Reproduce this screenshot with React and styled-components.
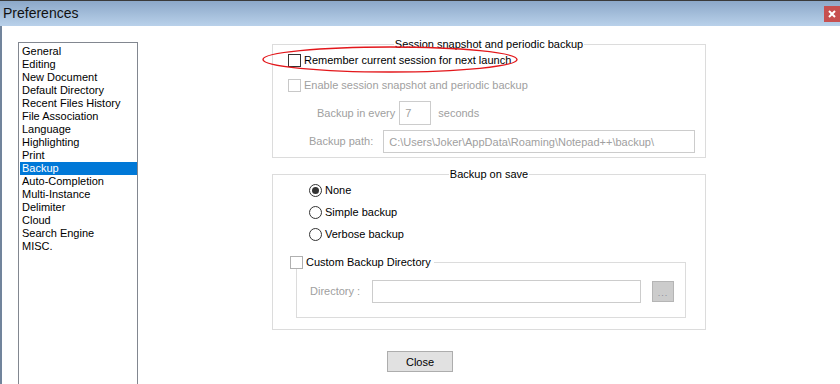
import React from 'react';
import styled, { createGlobalStyle } from 'styled-components';

const GlobalStyle = createGlobalStyle`
  * {
    margin: 0;
    padding: 0;
    box-sizing: border-box;
  }

  html, body, #root {
    width: 100%;
    height: 100%;
    overflow: hidden;
    background: #ffffff;
  }

  body {
    font-family: 'Liberation Sans', Arial, sans-serif;
    font-size: 11px;
    color: #000;
  }
`;

const Window = styled.div`
  width: 840px;
  height: 384px;
  display: flex;
  flex-direction: column;
  overflow: hidden;
`;

const TitleBar = styled.div`
  height: 26px;
  flex-shrink: 0;
  border-top: 1px solid #3a3a3a;
  background: linear-gradient(to bottom, #8ca8c9, #b9d1ea);
  display: flex;
  align-items: flex-start;
  justify-content: space-between;
  padding-left: 3px;
`;

const Title = styled.span`
  font-size: 14px;
  line-height: 25px;
  color: #111;
`;

const CloseX = styled.div`
  width: 16px;
  height: 16px;
  margin-top: 5px;
  background: #c75050;
  display: flex;
  align-items: center;
  justify-content: center;
`;

const Body = styled.div`
  flex: 1;
  display: flex;
  align-items: flex-start;
  border-left: 2px solid #71849c;
  background: #fff;
  overflow: hidden;
`;

const ListBox = styled.ul`
  list-style: none;
  width: 120px;
  height: 400px;
  margin: 16px 0 0 16px;
  border: 1px solid #828790;
  padding: 2px 0;
  flex-shrink: 0;
`;

const ListItem = styled.li`
  height: 13px;
  line-height: 13px;
  margin-left: 1px;
  padding-left: 2px;
  white-space: nowrap;
  background: ${p => (p.$selected ? '#0078d7' : 'transparent')};
  color: ${p => (p.$selected ? '#fff' : '#000')};
`;

const Pane = styled.div`
  width: 434px;
  margin: 18px 0 0 134px;
  display: flex;
  flex-direction: column;
`;

const Group = styled.div`
  position: relative;
  border: 1px solid #dcdcdc;
  margin-top: ${p => p.$top || 0}px;
  margin-left: ${p => p.$left || 0}px;
  margin-right: ${p => p.$right || 0}px;
  padding: ${p => p.$pad};
  display: flex;
  flex-direction: column;
`;

const Legend = styled.div`
  position: absolute;
  top: -7px;
  left: 0;
  right: 0;
  display: flex;
  justify-content: center;
  line-height: 13px;
`;

const LegendText = styled.span`
  background: #fff;
  padding: 0 1px;
  color: #000;
`;

const CheckLegend = styled.div`
  position: absolute;
  top: -7px;
  left: -7px;
  background: #fff;
  padding-right: 3px;
  display: flex;
  align-items: center;
  gap: 3px;
  line-height: 13px;
`;

const Row = styled.div`
  position: relative;
  display: flex;
  align-items: center;
  height: ${p => p.$h || 13}px;
  margin-top: ${p => p.$top || 0}px;
  margin-left: ${p => p.$left || 0}px;
  gap: ${p => p.$gap ?? 3}px;
`;

const Box = styled.span`
  width: 13px;
  height: 13px;
  flex-shrink: 0;
  border: 1px solid ${p => p.$border || '#333'};
  background: #fff;
`;

const Radio = styled.span`
  width: 13px;
  height: 13px;
  flex-shrink: 0;
  border-radius: 50%;
  border: 1px solid #333;
  background: #fff;
  display: flex;
  align-items: center;
  justify-content: center;

  &::after {
    content: '';
    display: ${p => (p.$checked ? 'block' : 'none')};
    width: 7px;
    height: 7px;
    border-radius: 50%;
    background: #333;
  }
`;

const Label = styled.span`
  line-height: 13px;
  white-space: nowrap;
  color: ${p => (p.$disabled ? '#a0a0a0' : '#000')};
  margin-left: ${p => p.$gap || 0}px;
`;

const TextBox = styled.div`
  width: ${p => p.$w}px;
  height: ${p => p.$h || 23}px;
  flex-shrink: 0;
  border: 1px solid #cccccc;
  background: #fff;
  color: #a0a0a0;
  padding-left: 5px;
  display: flex;
  align-items: center;
  white-space: nowrap;
  overflow: hidden;
  margin-left: ${p => p.$gap || 0}px;
`;

const BrowseButton = styled.div`
  width: 22px;
  height: 21px;
  flex-shrink: 0;
  margin-left: 11px;
  background: #cccccc;
  border: 1px solid #b5b5b5;
  color: #8a8a9a;
  font-size: 9px;
  letter-spacing: 1px;
  display: flex;
  align-items: center;
  justify-content: center;
  padding-top: 2px;
`;

const Annotation = styled.svg`
  position: absolute;
  left: -26px;
  top: -8px;
  width: 256px;
  height: 27px;
  pointer-events: none;
  overflow: visible;
`;

const Button = styled.button`
  align-self: flex-start;
  width: 66px;
  height: 21px;
  margin: 21px 0 0 115px;
  background: #e1e1e1;
  border: 1px solid #adadad;
  font-family: inherit;
  font-size: 11px;
  color: #000;
`;

const pages = [
  'General', 'Editing', 'New Document', 'Default Directory', 'Recent Files History',
  'File Association', 'Language', 'Highlighting', 'Print', 'Backup',
  'Auto-Completion', 'Multi-Instance', 'Delimiter', 'Cloud', 'Search Engine', 'MISC.',
];

const App = () => {
  return (
    <>
      <GlobalStyle />
      <Window>
        <TitleBar>
          <Title>Preferences</Title>
          <CloseX>
            <svg width="8" height="8" viewBox="0 0 8 8">
              <path d="M1 1 L7 7 M7 1 L1 7" stroke="#fff" strokeWidth="2" />
            </svg>
          </CloseX>
        </TitleBar>
        <Body>
          <ListBox>
            {pages.map(p => (
              <ListItem key={p} $selected={p === 'Backup'}>{p}</ListItem>
            ))}
          </ListBox>

          <Pane>
            <Group $pad="9px 10px 4px 15px">
              <Legend><LegendText>Session snapshot and periodic backup</LegendText></Legend>
              <Row>
                <Box />
                <Label>Remember current session for next launch</Label>
                <Annotation viewBox="0 0 256 27">
                  <ellipse cx="128" cy="13.5" rx="127" ry="12.5" fill="none" stroke="#e3171b" strokeWidth="1.4" />
                </Annotation>
              </Row>
              <Row $top={12}>
                <Box $border="#c8c8c8" />
                <Label $disabled>Enable session snapshot and periodic backup</Label>
              </Row>
              <Row $top={9} $h={24} $left={29} $gap={0}>
                <Label $disabled>Backup in every</Label>
                <TextBox $w={32} $h={24} $gap={4}>7</TextBox>
                <Label $disabled $gap={7}>seconds</Label>
              </Row>
              <Row $top={5} $h={23} $left={21} $gap={0}>
                <Label $disabled>Backup path:</Label>
                <TextBox $w={312} $gap={10}>C:\Users\Joker\AppData\Roaming\Notepad++\backup\</TextBox>
              </Row>
            </Group>

            <Group $top={16} $pad="9px 0 11px 0">
              <Legend><LegendText>Backup on save</LegendText></Legend>
              <Row $left={36}>
                <Radio $checked />
                <Label>None</Label>
              </Row>
              <Row $left={36} $top={9}>
                <Radio />
                <Label>Simple backup</Label>
              </Row>
              <Row $left={36} $top={9}>
                <Radio />
                <Label>Verbose backup</Label>
              </Row>

              <Group $top={21} $left={23} $right={19} $pad="17px 0 14px 0">
                <CheckLegend>
                  <Box $border="#b0b0b0" />
                  <Label>Custom Backup Directory</Label>
                </CheckLegend>
                <Row $left={13} $h={23} $gap={0}>
                  <Label $disabled>Directory :</Label>
                  <TextBox $w={269} $gap={12} />
                  <BrowseButton>...</BrowseButton>
                </Row>
              </Group>
            </Group>

            <Button>Close</Button>
          </Pane>
        </Body>
      </Window>
    </>
  );
};

export default App;
